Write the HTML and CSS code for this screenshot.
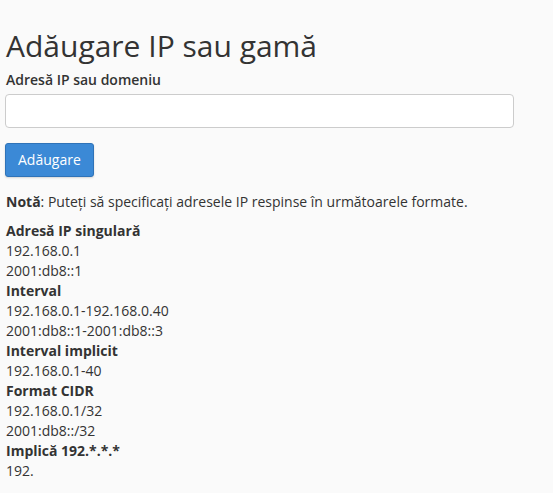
FILE: index.html
```html
<!DOCTYPE html>
<html lang="ro">
<head>
    <meta charset="UTF-8">
    <meta name="viewport" content="width=device-width, initial-scale=1.0">
    <title>Adăugare IP sau gamă</title>
    <link rel="stylesheet" href="styles.css">
</head>
<body>
    <div class="page">
        <h1 class="page-title">Adăugare IP sau gamă</h1>

        <form class="add-form">
            <label class="field-label" for="ip">Adresă IP sau domeniu</label>
            <input class="field-input" type="text" id="ip">
            <button type="submit" class="btn-primary">Adăugare</button>
        </form>

        <p class="note"><strong>Notă</strong>: Puteţi să specificaţi adresele IP respinse în următoarele formate.</p>

        <dl class="formats">
            <dt>Adresă IP singulară</dt>
            <dd>192.168.0.1</dd>
            <dd>2001:db8::1</dd>
            <dt>Interval</dt>
            <dd>192.168.0.1-192.168.0.40</dd>
            <dd>2001:db8::1-2001:db8::3</dd>
            <dt>Interval implicit</dt>
            <dd>192.168.0.1-40</dd>
            <dt>Format CIDR</dt>
            <dd>192.168.0.1/32</dd>
            <dd>2001:db8::/32</dd>
            <dt>Implică 192.*.*.*</dt>
            <dd>192.</dd>
        </dl>
    </div>
</body>
</html>
```

FILE: styles.css
```css
* {
    margin: 0;
    padding: 0;
    box-sizing: border-box;
}

body {
    background: #fafafa;
    color: #333;
    font-family: 'Open Sans', 'Noto Sans', sans-serif;
    font-size: 14px;
    line-height: 20px;
}

.page {
    padding: 0 39px 0 5px;
}

.page-title {
    font-size: 30px;
    font-weight: 400;
    line-height: 40px;
    margin-top: 26px;
    margin-bottom: 5px;
    padding-left: 1px;
}

.add-form {
    display: flex;
    flex-direction: column;
    align-items: flex-start;
}

.field-label {
    font-size: 14px;
    font-weight: 600;
    line-height: 18px;
    margin-bottom: 5px;
    padding-left: 1px;
}

.field-input {
    width: 100%;
    height: 34px;
    border: 1px solid #ccc;
    border-radius: 4px;
    background: #fff;
    font: inherit;
    padding: 6px 12px;
    outline: none;
}

.btn-primary {
    margin-top: 15px;
    height: 34px;
    padding: 0 12px;
    background: #3b89d6;
    color: #fff;
    border: 1px solid #2f73b8;
    border-radius: 3px;
    box-shadow: 0 1px 2px rgba(0, 0, 0, 0.15);
    font: inherit;
    cursor: pointer;
}

.note {
    margin-top: 15px;
    margin-bottom: 9px;
    padding-left: 1px;
}

.note strong {
    font-weight: 700;
}

.formats {
    padding-left: 1px;
}

.formats dt {
    font-weight: 700;
}
```
